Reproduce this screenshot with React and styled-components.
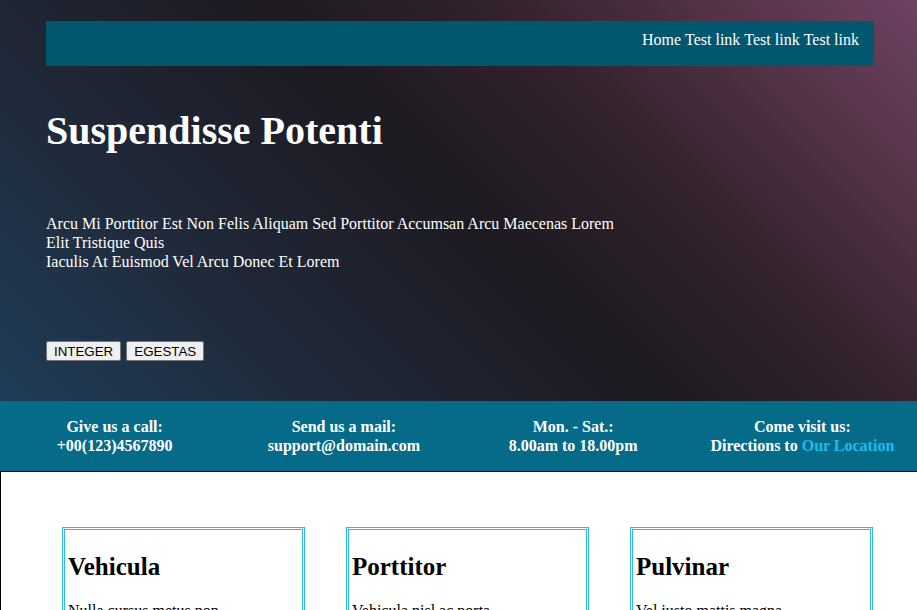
import React from "react";
import styled, { createGlobalStyle } from "styled-components";

const Global = createGlobalStyle`
  html, body { margin: 0; padding: 0; }
  body {
    font-family: "Liberation Serif", "Times New Roman", serif;
    font-size: 16px;
    background: #fff;
    overflow: hidden;
  }
`;

const Hero = styled.header`
  height: 401px;
  box-sizing: border-box;
  padding: 21px 43px 0 46px;
  background: linear-gradient(45deg, #1f3d57 0%, #1f2635 30%, #1d1a21 50%, #33222e 68%, #553449 85%, #6e4262 100%);
  color: #fff;
`;

const Nav = styled.nav`
  height: 45px;
  background: #02566e;
  display: flex;
  justify-content: flex-end;
  align-items: flex-start;
  padding: 10px 15px 0 0;
  box-sizing: border-box;
  font-size: 16px;
`;

const NavLink = styled.a`
  color: #fff;
  text-decoration: none;
  margin-left: 4px;
`;

const Title = styled.h1`
  margin: 41px 0 0;
  font-size: 40px;
  line-height: 48px;
  font-weight: bold;
`;

const Lead = styled.p`
  margin: 59px 0 0;
  max-width: 580px;
  font-size: 16px;
  line-height: 19px;
`;

const Buttons = styled.div`
  margin-top: 70px;
  display: flex;
  gap: 5px;
`;

const Button = styled.button`
  font-family: "Liberation Sans", Arial, sans-serif;
  font-size: 13.33px;
  padding: 1px 7px;
  height: 20px;
  background: #efefef;
  color: #000;
  border: 1px solid #767676;
  border-radius: 2px;
`;

const Contact = styled.section`
  height: 70px;
  background: #056b88;
  display: grid;
  grid-template-columns: repeat(4, 1fr);
  align-items: center;
  color: #fff;
`;

const ContactItem = styled.div`
  text-align: center;
  font-weight: bold;
  font-size: 16px;
  line-height: 19px;
`;

const LocationLink = styled.a`
  color: #1ebcef;
  text-decoration: none;
`;

const Features = styled.section`
  border-top: 1px solid #000;
  border-left: 1px solid #000;
  padding: 55px 0 0 61px;
  display: grid;
  grid-template-columns: repeat(3, 243px);
  column-gap: 41px;
`;

const Card = styled.article`
  border: 3px double #2fbcdc;
  padding: 0 3px;
  height: 300px;
`;

const CardTitle = styled.h2`
  margin: 22px 0 20px;
  font-size: 25px;
  line-height: 29px;
  font-weight: bold;
`;

const CardText = styled.p`
  margin: 0;
  font-size: 16px;
  line-height: 19px;
`;

const cards = [
  { title: "Vehicula", text: "Nulla cursus metus non" },
  { title: "Porttitor", text: "Vehicula nisl ac porta" },
  { title: "Pulvinar", text: "Vel justo mattis magna" },
];

export default function App() {
  return (
    <>
      <Global />
      <Hero>
        <Nav>
          <NavLink href="#">Home</NavLink>
          <NavLink href="#">Test link</NavLink>
          <NavLink href="#">Test link</NavLink>
          <NavLink href="#">Test link</NavLink>
        </Nav>
        <Title>Suspendisse Potenti</Title>
        <Lead>
          Arcu Mi Porttitor Est Non Felis Aliquam Sed Porttitor Accumsan Arcu Maecenas Lorem Elit Tristique Quis
          <br />
          Iaculis At Euismod Vel Arcu Donec Et Lorem
        </Lead>
        <Buttons>
          <Button>INTEGER</Button>
          <Button>EGESTAS</Button>
        </Buttons>
      </Hero>
      <Contact>
        <ContactItem>Give us a call:<br />+00(123)4567890</ContactItem>
        <ContactItem>Send us a mail:<br />support@domain.com</ContactItem>
        <ContactItem>Mon. - Sat.:<br />8.00am to 18.00pm</ContactItem>
        <ContactItem>Come visit us:<br />Directions to <LocationLink href="#">Our Location</LocationLink></ContactItem>
      </Contact>
      <Features>
        {cards.map((c) => (
          <Card key={c.title}>
            <CardTitle>{c.title}</CardTitle>
            <CardText>{c.text}</CardText>
          </Card>
        ))}
      </Features>
    </>
  );
}
